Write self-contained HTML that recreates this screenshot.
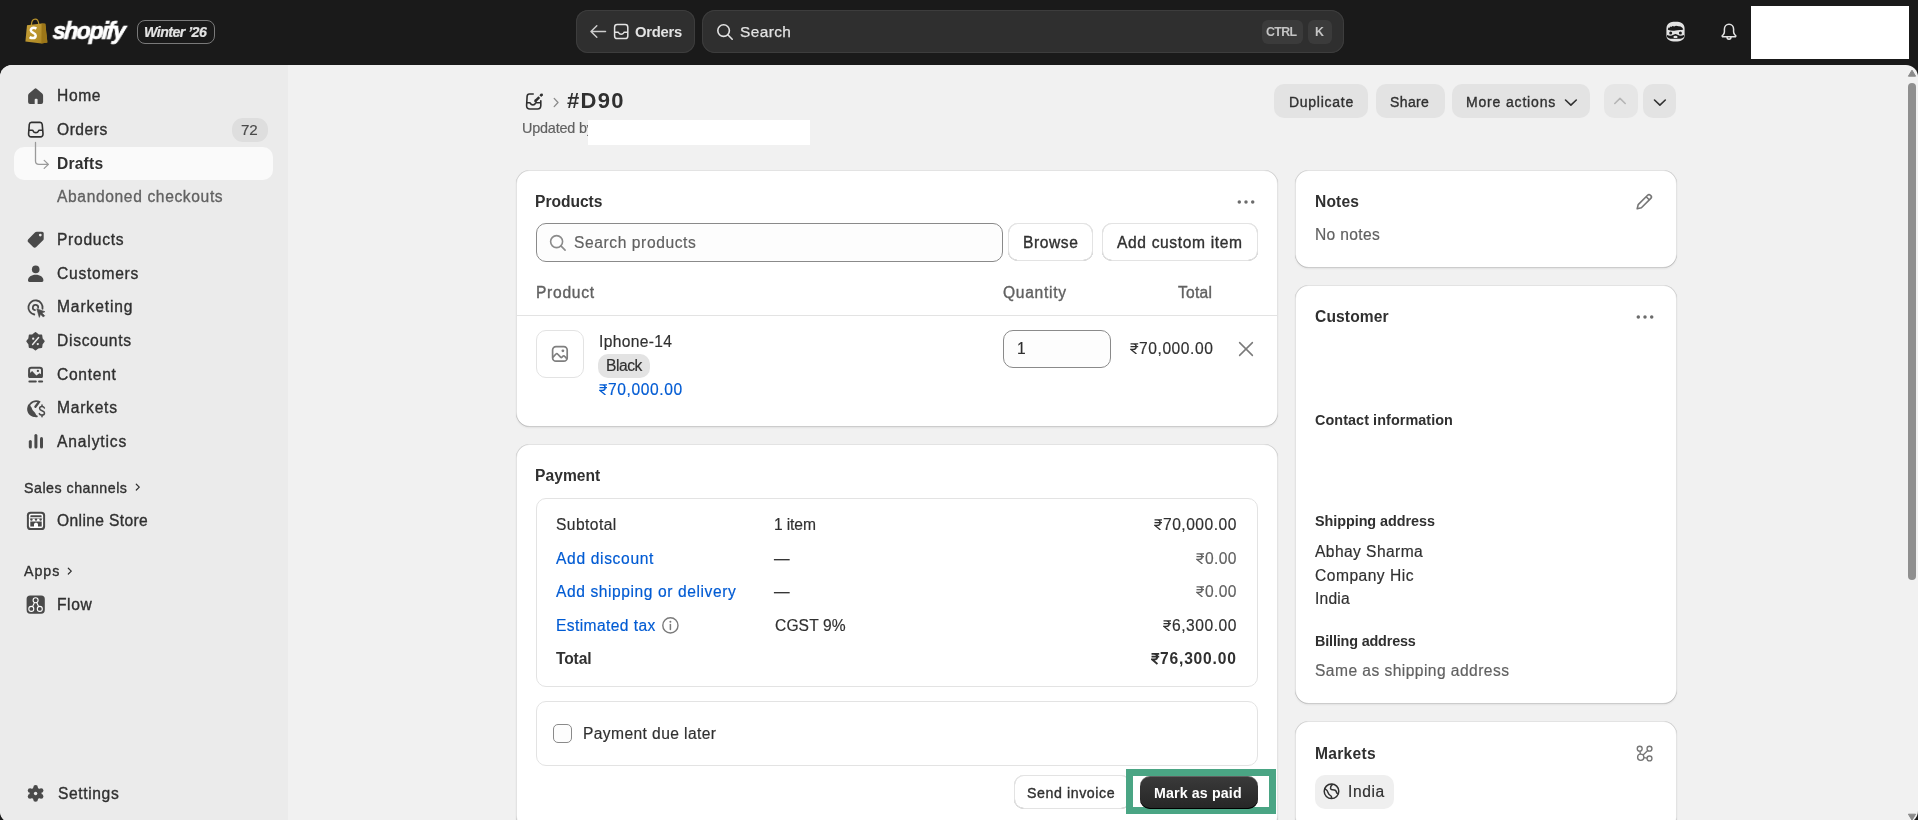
<!DOCTYPE html>
<html><head><meta charset="utf-8">
<style>
*{box-sizing:border-box;margin:0;padding:0}
html,body{width:1918px;height:820px;overflow:hidden;background:#1a1a1a}
body{font-family:"Liberation Sans",sans-serif;color:#303030;position:relative}
.abs{position:absolute}
.t{position:absolute;white-space:nowrap;line-height:1;will-change:transform}
#top{position:absolute;left:0;top:0;width:1918px;height:65px;background:#1a1a1a}
#frame{position:absolute;left:0;top:65px;width:1918px;height:758px;background:#f1f1f1;border-radius:12px}
#sideb{position:absolute;left:0;top:65px;width:288px;height:758px;background:#ebebeb;border-radius:12px 0 0 12px}
</style></head>
<body>
<div id="top"></div>
<svg class="abs" style="left:25px;top:18px" width="23" height="26" viewBox="0 0 23 26"><defs><linearGradient id="bg1" x1="0" y1="0" x2="1" y2="1"><stop offset="0" stop-color="#c9a23a"/><stop offset="1" stop-color="#a98420"/></linearGradient></defs><path d="M2 7.2L16.6 5.4L20.3 5.8L22.4 24.6L16.4 25.4L0.4 23.6Z" fill="url(#bg1)"/><path d="M16.6 5.4L20.3 5.8L22.4 24.6L16.4 25.4Z" fill="#9c7618"/><path d="M6.4 7C6.6 3 8.4 1.2 10.2 1.2C12 1.2 13.4 2.8 13.8 6" fill="none" stroke="#b8922c" stroke-width="1.2"/><path d="M11.4 10.6C10.6 10.1 9.7 9.8 8.7 9.8C6.9 9.8 5.8 10.9 5.8 12.3C5.8 15 10.7 14.7 10.7 17.4C10.7 18.9 9.5 20.1 7.7 20.1C6.6 20.1 5.5 19.7 4.6 19.1" fill="none" stroke="#ffffff" stroke-width="2.5"/></svg>
<div class="t" style="left:53.00px;top:19.53px;font-size:23px;color:#ffffff;letter-spacing:-1.497px;font-weight:700;font-style:italic;transform:skewX(-4deg);-webkit-text-stroke:0.7px #fff">shopify</div>
<div class="abs" style="left:137px;top:20px;width:78px;height:24px;background:none;border-radius:8px;border:1px solid #7a7a7a;box-sizing:border-box"></div>
<div class="t" style="left:143.90px;top:24.98px;font-size:14.2px;color:#e3e3e3;letter-spacing:-0.540px;font-weight:700;font-style:italic;-webkit-text-stroke:0.2px #e3e3e3">Winter ’26</div>
<div class="abs" style="left:576px;top:10px;width:119px;height:43px;background:#2f2f2f;border-radius:12px;box-shadow:0 0 0 1px #3d3d3d inset"></div>
<svg class="abs" style="left:589px;top:23px" width="18" height="17" viewBox="0 0 18 17"><path d="M16.5 8.5H2M7.8 2.8L2 8.5l5.8 5.7" fill="none" stroke="#cccccc" stroke-width="1.5" stroke-linecap="round" stroke-linejoin="round"/></svg>
<svg class="abs" style="left:613px;top:23px" width="17" height="17" viewBox="0 0 17 17"><rect x="1.6" y="1.6" width="13.2" height="14" rx="2.6" fill="none" stroke="#e3e3e3" stroke-width="1.5"/><path d="M1.6 9.2h3.2c.6 0 .9.3 1.1.8.3.7 1 1.2 2.3 1.2s2-.5 2.3-1.2c.2-.5.5-.8 1.1-.8h3.2" fill="none" stroke="#e3e3e3" stroke-width="1.5"/></svg>
<div class="t" style="left:635.40px;top:24.57px;font-size:14.8px;color:#e3e3e3;letter-spacing:-0.247px;font-weight:700">Orders</div>
<div class="abs" style="left:702px;top:10px;width:642px;height:43px;background:#2f2f2f;border-radius:13px;box-shadow:0 0 0 1px #3d3d3d inset"></div>
<svg class="abs" style="left:716px;top:23px" width="18" height="18" viewBox="0 0 18 18"><circle cx="7.6" cy="7.6" r="5.8" fill="none" stroke="#e3e3e3" stroke-width="1.6"/><path d="M11.8 11.8l4.4 4.4" stroke="#e3e3e3" stroke-width="1.6" stroke-linecap="round"/></svg>
<div class="t" style="left:740.40px;top:24.06px;font-size:15.4px;color:#e3e3e3;letter-spacing:0.421px;-webkit-text-stroke:0.25px #e3e3e3">Search</div>
<div class="abs" style="left:1262px;top:20px;width:41px;height:24px;background:#3b3b3b;border-radius:6px;"></div>
<div class="t" style="left:1266.20px;top:25.70px;font-size:12.4px;color:#c4c4c4;letter-spacing:-0.620px;font-weight:700">CTRL</div>
<div class="abs" style="left:1308px;top:20px;width:24px;height:24px;background:#3b3b3b;border-radius:6px;"></div>
<div class="t" style="left:1315.20px;top:25.70px;font-size:12.4px;color:#c4c4c4;letter-spacing:0.000px;font-weight:700">K</div>
<svg class="abs" style="left:1666px;top:21px" width="20" height="21" viewBox="0 0 20 21"><path d="M9.5 0.8C14.8 0.8 18.6 2.6 18.6 8V14.4C18.6 18.6 15 20.4 9.5 20.4S0.4 18.6 0.4 14.4V8C0.4 2.6 4.2 0.8 9.5 0.8z" fill="#e3e3e3"/><path d="M1.8 8.8L2.4 6.4L3.4 6.9L4.1 5.5L5.2 6.1L6.5 5L8.2 5.5L10 4.8L12.4 5.3L14.6 5.6L16.3 6.7L17.3 8.4C15 9.2 12.2 8.8 9.6 9.4C7 10 4.3 9.6 1.8 8.8z" fill="#1a1a1a"/><circle cx="4.7" cy="12" r="1.5" fill="#1a1a1a"/><circle cx="14.4" cy="12" r="1.5" fill="#1a1a1a"/><path d="M1.1 13.9C3.4 15.1 5.8 14.7 7.4 13.7C8.4 13.1 9 12.9 9.5 12.9S10.6 13.1 11.6 13.7C13.2 14.7 15.6 15.1 17.9 13.9L18.3 15.5C17.1 17.5 14.4 17.9 12.2 17.7H6.8C4.6 17.9 1.9 17.5 0.7 15.5z" fill="#1a1a1a"/><ellipse cx="9.5" cy="15.9" rx="2.1" ry="1.2" fill="#e3e3e3"/></svg>
<svg class="abs" style="left:1719px;top:22px" width="20" height="20" viewBox="0 0 20 20"><path d="M10 2.2c-2.8 0-4.6 2.2-4.6 5v2.6c0 1-.4 1.9-1 2.6l-1 1.1c-.5.6-.1 1.3.6 1.3h12c.7 0 1.1-.7.6-1.3l-1-1.1c-.6-.7-1-1.6-1-2.6V7.2c0-2.8-1.8-5-4.6-5z" fill="none" stroke="#e3e3e3" stroke-width="1.5" stroke-linejoin="round"/><path d="M8 15c0 1.2.9 2.2 2 2.2s2-1 2-2.2" fill="none" stroke="#e3e3e3" stroke-width="1.5"/></svg>
<div class="abs" style="left:1751px;top:6px;width:158px;height:53px;background:#ffffff;border-radius:0px;"></div>
<div id="frame"></div><div id="sideb"></div>
<svg class="abs" style="left:27px;top:87px" width="18" height="18" viewBox="0 0 18 18"><path d="M7.6 1.7a1.5 1.5 0 0 1 2 0l5.6 4.9c.6.5.9 1.2.9 2V15a1.9 1.9 0 0 1-1.9 1.9h-3.6v-4.2a1 1 0 0 0-1-1h-.9a1 1 0 0 0-1 1v4.2H3A1.9 1.9 0 0 1 1.1 15V8.6c0-.8.3-1.5.9-2z" fill="#4a4a4a"/></svg>
<div class="t" style="left:57.40px;top:87.79px;font-size:15.6px;color:#303030;letter-spacing:0.629px;-webkit-text-stroke:0.35px #303030">Home</div>
<svg class="abs" style="left:27px;top:121px" width="18" height="18" viewBox="0 0 18 18"><path d="M4.4 1.4H13C14.2 1.4 15 2.2 15.2 3.4L16 12.6C16.2 14.6 15.1 15.9 13.3 15.9H4.3C2.5 15.9 1.4 14.6 1.6 12.6L2.3 3.4C2.5 2.2 3.3 1.4 4.4 1.4Z" fill="none" stroke="#303030" stroke-width="1.6"/><path d="M1.8 9.3H5.2c.6 0 .9.4 1.1.9.3.8 1.2 1.4 2.5 1.4s2.2-.6 2.5-1.4c.2-.5.5-.9 1.1-.9h3.4" fill="none" stroke="#303030" stroke-width="1.6"/></svg>
<div class="t" style="left:57.40px;top:122.39px;font-size:15.6px;color:#303030;letter-spacing:0.525px;-webkit-text-stroke:0.35px #303030">Orders</div>
<div class="abs" style="left:232px;top:118px;width:36px;height:24px;background:#dedede;border-radius:11px;"></div>
<div class="t" style="left:241.10px;top:122.23px;font-size:15.2px;color:#4a4a4a;letter-spacing:-0.307px;-webkit-text-stroke:0.18px #4a4a4a">72</div>
<div class="abs" style="left:14px;top:147px;width:259px;height:33px;background:#fafafa;border-radius:10px;"></div>
<svg class="abs" style="left:30px;top:141px" width="22" height="30" viewBox="0 0 22 30"><path d="M5.5 1.4v18.6c0 2 1.4 3.4 3.4 3.4h9.5M14.2 19.4l4.2 4-4.2 4" fill="none" stroke="#9a9a9a" stroke-width="1.3" stroke-linecap="round" stroke-linejoin="round"/></svg>
<div class="t" style="left:57.40px;top:155.79px;font-size:15.6px;color:#303030;letter-spacing:0.204px;font-weight:700">Drafts</div>
<div class="t" style="left:57.40px;top:188.59px;font-size:15.6px;color:#616161;letter-spacing:0.629px;-webkit-text-stroke:0.3px #616161">Abandoned checkouts</div>
<svg class="abs" style="left:24.9px;top:229.3px" width="21.4" height="21.4" viewBox="0 0 20 20"><path d="M11 2.5H16C16.8 2.5 17.5 3.2 17.5 4V9C17.5 9.6 17.3 10.1 16.9 10.5L10.5 16.9C9.7 17.7 8.4 17.7 7.6 16.9L3.1 12.4C2.3 11.6 2.3 10.3 3.1 9.5L9.5 3.1C9.9 2.7 10.4 2.5 11 2.5Z" fill="#4a4a4a"/><circle cx="14.3" cy="5.7" r="1.3" fill="#ebebeb"/></svg>
<div class="t" style="left:57.40px;top:231.99px;font-size:15.6px;color:#303030;letter-spacing:0.705px;-webkit-text-stroke:0.35px #303030">Products</div>
<svg class="abs" style="left:27px;top:264px" width="18" height="18" viewBox="0 0 18 18"><circle cx="8.7" cy="5.4" r="3.8" fill="#4a4a4a"/><path d="M1 16.3c0-3.3 3.2-5.6 7.7-5.6s7.7 2.3 7.7 5.6c0 .9-.5 1.6-1.4 1.6H2.4C1.5 17.9 1 17.2 1 16.3z" fill="#4a4a4a"/></svg>
<div class="t" style="left:57.40px;top:265.59px;font-size:15.6px;color:#303030;letter-spacing:0.735px;-webkit-text-stroke:0.35px #303030">Customers</div>
<svg class="abs" style="left:22px;top:294px" width="28" height="30" viewBox="22 294 28 30"><path d="M34.27 314.49A7.1 7.1 0 1 1 42.49 308.73" fill="none" stroke="#4a4a4a" stroke-width="1.8" stroke-linecap="round"/><path d="M35.03 310.16A2.7 2.7 0 1 1 38.16 307.97" fill="none" stroke="#4a4a4a" stroke-width="1.7" stroke-linecap="round"/><path d="M36.8 308.8L45 311.7L41.9 312.9L44.7 315.7L43.3 317.1L40.5 314.3L39.3 317.4Z" fill="#4a4a4a" stroke="#4a4a4a" stroke-width="0.6" stroke-linejoin="round"/></svg>
<div class="t" style="left:57.40px;top:299.49px;font-size:15.6px;color:#303030;letter-spacing:0.876px;-webkit-text-stroke:0.35px #303030">Marketing</div>
<svg class="abs" style="left:22px;top:328px" width="28" height="28" viewBox="22 328 28 28"><path d="M35.50 332.90L38.14 334.93L41.44 335.36L41.87 338.66L43.90 341.30L41.87 343.94L41.44 347.24L38.14 347.67L35.50 349.70L32.86 347.67L29.56 347.24L29.13 343.94L27.10 341.30L29.13 338.66L29.56 335.36L32.86 334.93Z" fill="#4a4a4a" stroke="#4a4a4a" stroke-width="1.6" stroke-linejoin="round"/><path d="M32.6 344.5L38.6 337.6" stroke="#ebebeb" stroke-width="1.5" stroke-linecap="round"/><circle cx="33.2" cy="338.7" r="1.15" fill="#ebebeb"/><circle cx="37.8" cy="344.1" r="1.15" fill="#ebebeb"/></svg>
<div class="t" style="left:57.40px;top:332.89px;font-size:15.6px;color:#303030;letter-spacing:0.701px;-webkit-text-stroke:0.35px #303030">Discounts</div>
<svg class="abs" style="left:22px;top:362px" width="28" height="28" viewBox="22 362 28 28"><rect x="29.1" y="367.8" width="12.9" height="9.3" rx="2.2" fill="none" stroke="#4a4a4a" stroke-width="2"/><path d="M28.4 374.6L32.1 371L36.4 375.4L39.4 373.3L42.7 375.3V376.8C42.7 377.5 42.2 378.1 41.5 378.1H29.6C28.9 378.1 28.4 377.5 28.4 376.8z" fill="#4a4a4a"/><circle cx="37.9" cy="370.9" r="1.15" fill="#4a4a4a"/><rect x="28.4" y="380.6" width="8.4" height="1.9" rx=".95" fill="#4a4a4a"/><rect x="38.1" y="380.6" width="5" height="1.9" rx=".95" fill="#4a4a4a"/></svg>
<div class="t" style="left:57.40px;top:366.59px;font-size:15.6px;color:#303030;letter-spacing:0.710px;-webkit-text-stroke:0.35px #303030">Content</div>
<svg class="abs" style="left:20px;top:395px" width="30" height="30" viewBox="20 395 30 30"><path d="M40.2 402.3A7.6 7.6 0 1 0 37.6 416.2" stroke="#4a4a4a" stroke-width="1.6" fill="none"/><path d="M28.6 404.2C30.3 405.6 31.6 407 32 408.8C32.4 410.9 34.4 411.5 35.2 412.9C35.7 414 36.3 415.4 37.3 416.4A7.6 7.6 0 0 1 27.2 408.5A7.6 7.6 0 0 1 28.6 404.2Z" fill="#4a4a4a"/><path d="M35.4 406.8L38.4 402.8" stroke="#4a4a4a" stroke-width="2.3" stroke-linecap="round"/><path d="M44.4 408C44 407.1 43.1 406.5 42 406.5C40.6 406.5 39.6 407.3 39.6 408.5C39.6 411.2 44.5 410.3 44.5 413C44.5 414.2 43.4 415.1 41.9 415.1C40.7 415.1 39.7 414.5 39.3 413.6M42 405V406.5M42 415.1V416.8" fill="none" stroke="#4a4a4a" stroke-width="1.5" stroke-linecap="round"/></svg>
<div class="t" style="left:57.40px;top:399.59px;font-size:15.6px;color:#303030;letter-spacing:0.754px;-webkit-text-stroke:0.35px #303030">Markets</div>
<svg class="abs" style="left:27px;top:432px" width="18" height="18" viewBox="0 0 18 18"><rect x="1.8" y="8" width="3" height="8.6" rx="1.5" fill="#4a4a4a"/><rect x="7.4" y="2" width="3" height="14.6" rx="1.5" fill="#4a4a4a"/><rect x="13" y="5" width="3" height="11.6" rx="1.5" fill="#4a4a4a"/></svg>
<div class="t" style="left:57.40px;top:433.79px;font-size:15.6px;color:#303030;letter-spacing:0.860px;-webkit-text-stroke:0.35px #303030">Analytics</div>
<div class="t" style="left:23.90px;top:480.88px;font-size:14.2px;color:#303030;letter-spacing:0.515px;-webkit-text-stroke:0.35px #303030">Sales channels</div>
<svg class="abs" style="left:133px;top:482px" width="10" height="10" viewBox="0 0 10 10"><path d="M3.3 2.2l3 2.9-3 2.9" fill="none" stroke="#303030" stroke-width="1.2" stroke-linecap="round" stroke-linejoin="round"/></svg>
<svg class="abs" style="left:26px;top:511px" width="20" height="20" viewBox="0 0 20 20"><rect x="0.9" y="0.7" width="18.2" height="18.3" rx="3.6" fill="#4a4a4a"/><rect x="2.9" y="2.7" width="14.2" height="14.3" rx="2" fill="#ffffff"/><rect x="4.3" y="4.2" width="11.4" height="1.9" rx="0.9" fill="#4a4a4a"/><path d="M3.6 7.2h12.8" stroke="#9a9a9a" stroke-width="1.2"/><circle cx="5.4" cy="8.6" r="1.2" fill="#4a4a4a"/><circle cx="10" cy="8.6" r="1.2" fill="#4a4a4a"/><circle cx="14.6" cy="8.6" r="1.2" fill="#4a4a4a"/><path d="M4.3 10.4h11.4V15.6H12V13.4c0-1-.8-1.7-2-1.7s-2 .7-2 1.7v2.2H4.3z" fill="#4a4a4a"/></svg>
<div class="t" style="left:57.40px;top:512.99px;font-size:15.6px;color:#303030;letter-spacing:0.371px;-webkit-text-stroke:0.35px #303030">Online Store</div>
<div class="t" style="left:23.90px;top:564.38px;font-size:14.2px;color:#303030;letter-spacing:0.978px;-webkit-text-stroke:0.35px #303030">Apps</div>
<svg class="abs" style="left:65px;top:565.5px" width="10" height="10" viewBox="0 0 10 10"><path d="M3.3 2.2l3 2.9-3 2.9" fill="none" stroke="#303030" stroke-width="1.2" stroke-linecap="round" stroke-linejoin="round"/></svg>
<svg class="abs" style="left:26.3px;top:595.3px" width="20" height="20" viewBox="0 0 20 20"><rect x="0.6" y="0.4" width="18.2" height="18.3" rx="3.6" fill="#4a4a4a"/><g fill="none" stroke="#fff" stroke-width="1.1"><circle cx="9.6" cy="5.3" r="2.5"/><circle cx="5.3" cy="13.9" r="2.5"/><circle cx="13.8" cy="13.9" r="2.5"/><path d="M8.5 7.5L6.6 11.6M10.7 7.5l1.9 4.1"/></g></svg>
<div class="t" style="left:57.40px;top:596.69px;font-size:15.6px;color:#303030;letter-spacing:0.588px;-webkit-text-stroke:0.35px #303030">Flow</div>
<svg class="abs" style="left:26px;top:784px" width="19" height="19" viewBox="0 0 19 19"><g fill="#4a4a4a"><circle cx="9.6" cy="3.4" r="2.3"/><circle cx="9.6" cy="15.5" r="2.3"/><circle cx="4.1" cy="6.5" r="2.3"/><circle cx="15.1" cy="6.5" r="2.3"/><circle cx="4.1" cy="12.4" r="2.3"/><circle cx="15.1" cy="12.4" r="2.3"/><circle cx="9.6" cy="9.45" r="6"/></g><circle cx="9.6" cy="9.45" r="1.7" fill="#ebebeb"/></svg>
<div class="t" style="left:57.60px;top:785.89px;font-size:15.6px;color:#303030;letter-spacing:0.619px;-webkit-text-stroke:0.35px #303030">Settings</div>
<svg class="abs" style="left:524px;top:91px" width="20" height="20" viewBox="0 0 20 20"><path d="M9.2 3H5.4C4 3 3.2 4 3.1 5.4L2.6 14.6C2.5 16.8 3.8 18 5.8 18H13.4C15.5 18 16.8 16.8 16.8 14.6V9.8" fill="none" stroke="#303030" stroke-width="1.6" stroke-linecap="round"/><path d="M2.8 11.7h2.7c.6 0 .9.4 1.1.9.3.8 1.2 1.3 2.3 1.3s2-.5 2.3-1.3c.2-.5.5-.9 1.1-.9h4.5" fill="none" stroke="#303030" stroke-width="1.6"/><path d="M11.5 9.9L15.3 6.1" stroke="#303030" stroke-width="2.6"/><circle cx="11.5" cy="9.9" r="1.3" fill="#303030"/><path d="M16.3 5.1L17.7 3.7" stroke="#303030" stroke-width="2.6"/><circle cx="17.7" cy="3.7" r="1.3" fill="#303030"/></svg>
<svg class="abs" style="left:552px;top:97px" width="8" height="11" viewBox="0 0 8 11"><path d="M2.2 1.4l3.8 4.1-3.8 4.1" fill="none" stroke="#8a8a8a" stroke-width="1.3" stroke-linecap="round" stroke-linejoin="round"/></svg>
<div class="t" style="left:567.10px;top:90.18px;font-size:22px;color:#303030;letter-spacing:1.302px;font-weight:700">#D90</div>
<div class="t" style="left:521.90px;top:120.81px;font-size:14.4px;color:#616161;letter-spacing:-0.184px;-webkit-text-stroke:0.18px #616161">Updated by</div>
<div class="abs" style="left:588px;top:120px;width:222px;height:25px;background:#ffffff;border-radius:0px;"></div>
<div class="abs" style="left:1274px;top:84px;width:94px;height:34px;background:#e3e3e3;border-radius:10px;"></div>
<div class="t" style="left:1288.60px;top:94.85px;font-size:14px;color:#303030;letter-spacing:0.729px;-webkit-text-stroke:0.35px #303030">Duplicate</div>
<div class="abs" style="left:1376px;top:84px;width:69px;height:34px;background:#e3e3e3;border-radius:10px;"></div>
<div class="t" style="left:1390.00px;top:94.85px;font-size:14px;color:#303030;letter-spacing:0.385px;-webkit-text-stroke:0.35px #303030">Share</div>
<div class="abs" style="left:1452px;top:84px;width:138px;height:34px;background:#e3e3e3;border-radius:10px;"></div>
<div class="t" style="left:1465.90px;top:94.85px;font-size:14px;color:#303030;letter-spacing:0.832px;-webkit-text-stroke:0.35px #303030">More actions</div>
<svg class="abs" style="left:1563px;top:97px" width="16" height="11" viewBox="0 0 16 11"><path d="M2.5 3l5.4 5.2L13.3 3" fill="none" stroke="#303030" stroke-width="1.6" stroke-linecap="round" stroke-linejoin="round"/></svg>
<div class="abs" style="left:1604px;top:84px;width:34px;height:34px;background:#e6e6e6;border-radius:10px;"></div>
<svg class="abs" style="left:1612px;top:95px" width="16" height="11" viewBox="0 0 16 11"><path d="M2.8 8.5L8 3.4l5.2 5.1" fill="none" stroke="#b5b5b5" stroke-width="1.6" stroke-linecap="round" stroke-linejoin="round"/></svg>
<div class="abs" style="left:1643px;top:84px;width:33px;height:34px;background:#e3e3e3;border-radius:10px;"></div>
<svg class="abs" style="left:1652px;top:97px" width="16" height="11" viewBox="0 0 16 11"><path d="M2.5 3l5.4 5.2L13.3 3" fill="none" stroke="#303030" stroke-width="1.6" stroke-linecap="round" stroke-linejoin="round"/></svg>
<div class="abs" style="left:516px;top:170px;width:762px;height:257px;background:#ffffff;border-radius:14px;box-shadow:0 1px 2px 0 rgba(26,26,26,.07),0 1px 0 0 rgba(0,0,0,.11) inset,0 -1px 0 0 rgba(0,0,0,.2) inset,-1px 0 0 0 rgba(0,0,0,.11) inset,1px 0 0 0 rgba(0,0,0,.11) inset"></div>
<div class="t" style="left:535.10px;top:193.79px;font-size:15.6px;color:#303030;letter-spacing:-0.016px;font-weight:700">Products</div>
<svg class="abs" style="left:1235.6px;top:197.6px" width="20" height="8" viewBox="0 0 20 8"><circle cx="3.3" cy="4" r="1.75" fill="#6b6b6b"/><circle cx="10" cy="4" r="1.75" fill="#6b6b6b"/><circle cx="16.7" cy="4" r="1.75" fill="#6b6b6b"/></svg>
<div class="abs" style="left:536px;top:223px;width:467px;height:39px;background:#fdfdfd;border-radius:10px;border:1px solid #8a8a8a;box-sizing:border-box"></div>
<svg class="abs" style="left:548px;top:233px" width="20" height="20" viewBox="0 0 20 20"><circle cx="8.6" cy="8.6" r="6" fill="none" stroke="#8a8a8a" stroke-width="1.6"/><path d="M12.9 12.9l4.2 4.2" stroke="#8a8a8a" stroke-width="1.6" stroke-linecap="round"/></svg>
<div class="t" style="left:574.40px;top:234.59px;font-size:15.6px;color:#616161;letter-spacing:0.586px;-webkit-text-stroke:0.18px #616161">Search products</div>
<div class="abs" style="left:1008px;top:223px;width:85px;height:38px;background:#ffffff;border-radius:10px;box-shadow:0 0 0 1px #e3e3e3 inset,0 -1px 0 0 #b5b5b5 inset,1px 0 0 0 #d4d4d4 inset,-1px 0 0 0 #d4d4d4 inset"></div>
<div class="t" style="left:1022.60px;top:234.99px;font-size:15.6px;color:#303030;letter-spacing:0.576px;-webkit-text-stroke:0.35px #303030">Browse</div>
<div class="abs" style="left:1102px;top:223px;width:156px;height:38px;background:#ffffff;border-radius:10px;box-shadow:0 0 0 1px #e3e3e3 inset,0 -1px 0 0 #b5b5b5 inset,1px 0 0 0 #d4d4d4 inset,-1px 0 0 0 #d4d4d4 inset"></div>
<div class="t" style="left:1116.80px;top:234.99px;font-size:15.6px;color:#303030;letter-spacing:0.637px;-webkit-text-stroke:0.35px #303030">Add custom item</div>
<div class="t" style="left:536.00px;top:285.09px;font-size:15.6px;color:#616161;letter-spacing:0.706px;-webkit-text-stroke:0.35px #616161">Product</div>
<div class="t" style="left:1002.70px;top:285.09px;font-size:15.6px;color:#616161;letter-spacing:0.715px;-webkit-text-stroke:0.35px #616161">Quantity</div>
<div class="t" style="left:1177.60px;top:285.09px;font-size:15.6px;color:#616161;letter-spacing:0.230px;-webkit-text-stroke:0.35px #616161">Total</div>
<div class="abs" style="left:516px;top:315px;width:762px;height:1px;background:#e3e3e3;border-radius:0px;"></div>
<div class="abs" style="left:536.3px;top:330px;width:47.5px;height:48px;background:#ffffff;border-radius:10px;border:1px solid #e3e3e3;box-sizing:border-box"></div>
<svg class="abs" style="left:550px;top:344px" width="20" height="20" viewBox="0 0 20 20"><rect x="2.6" y="2.6" width="14.6" height="14.6" rx="3.4" fill="none" stroke="#7f7f7f" stroke-width="1.7"/><circle cx="12.9" cy="6.8" r="1.4" fill="#7f7f7f"/><path d="M2.8 13.4l3.2-3.4c.5-.5 1.2-.5 1.6 0l3 3.2c.4.4 1 .4 1.4 0l1-1c.5-.5 1.2-.4 1.6.1l2.6 2.8" fill="none" stroke="#7f7f7f" stroke-width="1.7"/></svg>
<div class="t" style="left:598.60px;top:333.99px;font-size:15.6px;color:#303030;letter-spacing:0.342px;-webkit-text-stroke:0.18px #303030">Iphone-14</div>
<div class="abs" style="left:598px;top:354px;width:52px;height:24px;background:#e3e3e3;border-radius:10px;"></div>
<div class="t" style="left:605.60px;top:357.59px;font-size:15.6px;color:#303030;letter-spacing:-0.462px;-webkit-text-stroke:0.18px #303030">Black</div>
<div class="t" style="left:607.77px;top:381.89px;font-size:15.6px;color:#005bd3;letter-spacing:0.603px;-webkit-text-stroke:0.18px #005bd3">70,000.00</div>
<svg class="abs" style="left:598.70px;top:383.76px" width="8.74" height="11.34" viewBox="0 0 10 13"><path d="M0.6 1H9.4M0.6 4.2H9.4M0.9 1H3.6C5.9 1 7.1 2.4 7.1 4.2C7.1 6 5.9 7.4 3.6 7.4H1.2L7.4 12.6" fill="none" stroke="#005bd3" stroke-width="1.52" stroke-linejoin="miter"/></svg>
<div class="abs" style="left:1003px;top:330px;width:108px;height:38px;background:#fdfdfd;border-radius:10px;border:1px solid #8a8a8a;box-sizing:border-box"></div>
<div class="t" style="left:1016.60px;top:340.69px;font-size:15.6px;color:#303030;letter-spacing:0.000px;-webkit-text-stroke:0.18px #303030">1</div>
<div class="t" style="left:1138.97px;top:340.69px;font-size:15.6px;color:#303030;letter-spacing:0.566px;-webkit-text-stroke:0.18px #303030">70,000.00</div>
<svg class="abs" style="left:1129.90px;top:342.56px" width="8.74" height="11.34" viewBox="0 0 10 13"><path d="M0.6 1H9.4M0.6 4.2H9.4M0.9 1H3.6C5.9 1 7.1 2.4 7.1 4.2C7.1 6 5.9 7.4 3.6 7.4H1.2L7.4 12.6" fill="none" stroke="#303030" stroke-width="1.52" stroke-linejoin="miter"/></svg>
<svg class="abs" style="left:1235px;top:338px" width="22" height="22" viewBox="0 0 22 22"><path d="M4.6 4.6l12.8 12.8M17.4 4.6L4.6 17.4" stroke="#7a7a7a" stroke-width="1.5" stroke-linecap="round"/></svg>
<div class="abs" style="left:516px;top:444px;width:762px;height:386px;background:#ffffff;border-radius:14px;box-shadow:0 1px 2px 0 rgba(26,26,26,.07),0 1px 0 0 rgba(0,0,0,.11) inset,0 -1px 0 0 rgba(0,0,0,.2) inset,-1px 0 0 0 rgba(0,0,0,.11) inset,1px 0 0 0 rgba(0,0,0,.11) inset"></div>
<div class="t" style="left:535.10px;top:467.79px;font-size:15.6px;color:#303030;letter-spacing:0.045px;font-weight:700">Payment</div>
<div class="abs" style="left:536px;top:498px;width:722px;height:189px;background:none;border-radius:10px;border:1px solid #e3e3e3;box-sizing:border-box"></div>
<div class="t" style="left:556.40px;top:516.89px;font-size:15.6px;color:#303030;letter-spacing:0.437px;-webkit-text-stroke:0.18px #303030">Subtotal</div>
<div class="t" style="left:774.40px;top:516.89px;font-size:15.6px;color:#303030;letter-spacing:-0.116px;-webkit-text-stroke:0.18px #303030">1 item</div>
<div class="t" style="left:1162.67px;top:516.89px;font-size:15.6px;color:#303030;letter-spacing:0.503px;-webkit-text-stroke:0.18px #303030">70,000.00</div>
<svg class="abs" style="left:1153.60px;top:518.76px" width="8.74" height="11.34" viewBox="0 0 10 13"><path d="M0.6 1H9.4M0.6 4.2H9.4M0.9 1H3.6C5.9 1 7.1 2.4 7.1 4.2C7.1 6 5.9 7.4 3.6 7.4H1.2L7.4 12.6" fill="none" stroke="#303030" stroke-width="1.52" stroke-linejoin="miter"/></svg>
<div class="t" style="left:556.40px;top:550.69px;font-size:15.6px;color:#005bd3;letter-spacing:0.655px;-webkit-text-stroke:0.18px #005bd3">Add discount</div>
<div class="t" style="left:774.40px;top:550.69px;font-size:15.6px;color:#303030;letter-spacing:0.000px;-webkit-text-stroke:0.18px #303030">—</div>
<div class="t" style="left:1204.57px;top:550.69px;font-size:15.6px;color:#616161;letter-spacing:0.389px;-webkit-text-stroke:0.18px #616161">0.00</div>
<svg class="abs" style="left:1195.50px;top:552.56px" width="8.74" height="11.34" viewBox="0 0 10 13"><path d="M0.6 1H9.4M0.6 4.2H9.4M0.9 1H3.6C5.9 1 7.1 2.4 7.1 4.2C7.1 6 5.9 7.4 3.6 7.4H1.2L7.4 12.6" fill="none" stroke="#616161" stroke-width="1.52" stroke-linejoin="miter"/></svg>
<div class="t" style="left:556.40px;top:584.09px;font-size:15.6px;color:#005bd3;letter-spacing:0.578px;-webkit-text-stroke:0.18px #005bd3">Add shipping or delivery</div>
<div class="t" style="left:774.40px;top:584.09px;font-size:15.6px;color:#303030;letter-spacing:0.000px;-webkit-text-stroke:0.18px #303030">—</div>
<div class="t" style="left:1204.57px;top:584.09px;font-size:15.6px;color:#616161;letter-spacing:0.389px;-webkit-text-stroke:0.18px #616161">0.00</div>
<svg class="abs" style="left:1195.50px;top:585.96px" width="8.74" height="11.34" viewBox="0 0 10 13"><path d="M0.6 1H9.4M0.6 4.2H9.4M0.9 1H3.6C5.9 1 7.1 2.4 7.1 4.2C7.1 6 5.9 7.4 3.6 7.4H1.2L7.4 12.6" fill="none" stroke="#616161" stroke-width="1.52" stroke-linejoin="miter"/></svg>
<div class="t" style="left:556.40px;top:617.79px;font-size:15.6px;color:#005bd3;letter-spacing:0.399px;-webkit-text-stroke:0.18px #005bd3">Estimated tax</div>
<svg class="abs" style="left:661px;top:616px" width="19" height="19" viewBox="0 0 19 19"><circle cx="9.4" cy="9.4" r="7.6" fill="none" stroke="#7a7a7a" stroke-width="1.4"/><path d="M9.4 8.4v5" stroke="#7a7a7a" stroke-width="1.5" stroke-linecap="round"/><circle cx="9.4" cy="5.8" r="1" fill="#7a7a7a"/></svg>
<div class="t" style="left:774.90px;top:617.79px;font-size:15.6px;color:#303030;letter-spacing:0.114px;-webkit-text-stroke:0.18px #303030">CGST 9%</div>
<div class="t" style="left:1171.57px;top:617.79px;font-size:15.6px;color:#303030;letter-spacing:0.543px;-webkit-text-stroke:0.18px #303030">6,300.00</div>
<svg class="abs" style="left:1162.50px;top:619.66px" width="8.74" height="11.34" viewBox="0 0 10 13"><path d="M0.6 1H9.4M0.6 4.2H9.4M0.9 1H3.6C5.9 1 7.1 2.4 7.1 4.2C7.1 6 5.9 7.4 3.6 7.4H1.2L7.4 12.6" fill="none" stroke="#303030" stroke-width="1.52" stroke-linejoin="miter"/></svg>
<div class="t" style="left:556.40px;top:651.49px;font-size:15.6px;color:#303030;letter-spacing:-0.141px;font-weight:700">Total</div>
<div class="t" style="left:1160.17px;top:651.49px;font-size:15.6px;color:#303030;letter-spacing:0.816px;font-weight:700">76,300.00</div>
<svg class="abs" style="left:1151.10px;top:653.36px" width="8.74" height="11.34" viewBox="0 0 10 13"><path d="M0.6 1H9.4M0.6 4.2H9.4M0.9 1H3.6C5.9 1 7.1 2.4 7.1 4.2C7.1 6 5.9 7.4 3.6 7.4H1.2L7.4 12.6" fill="none" stroke="#303030" stroke-width="2.15" stroke-linejoin="miter"/></svg>
<div class="abs" style="left:536px;top:701px;width:722px;height:65px;background:none;border-radius:10px;border:1px solid #e3e3e3;box-sizing:border-box"></div>
<div class="abs" style="left:553px;top:723.8px;width:19px;height:19px;background:#fdfdfd;border-radius:5px;border:1.3px solid #8a8a8a;box-sizing:border-box"></div>
<div class="t" style="left:582.60px;top:725.59px;font-size:15.6px;color:#303030;letter-spacing:0.400px;-webkit-text-stroke:0.18px #303030">Payment due later</div>
<div class="abs" style="left:1013.5px;top:775.2px;width:117px;height:33.5px;background:#ffffff;border-radius:10px;box-shadow:0 0 0 1px #e3e3e3 inset,0 -1px 0 0 #b5b5b5 inset,1px 0 0 0 #d4d4d4 inset,-1px 0 0 0 #d4d4d4 inset"></div>
<div class="t" style="left:1027.40px;top:785.78px;font-size:14.2px;color:#303030;letter-spacing:0.581px;-webkit-text-stroke:0.35px #303030">Send invoice</div>
<div class="abs" style="left:1126px;top:769px;width:149.5px;height:45px;background:none;border-radius:0px;border:7px solid #4aa584;box-sizing:border-box"></div>
<div class="abs" style="left:1140.3px;top:776px;width:117.5px;height:32.7px;background:linear-gradient(#3a3a3a,#262626);border-radius:10px;box-shadow:0 -1px 0 0 #000 inset,0 1px 0 0 rgba(255,255,255,.2) inset"></div>
<div class="t" style="left:1154.40px;top:785.78px;font-size:14.2px;color:#ffffff;letter-spacing:0.152px;font-weight:700">Mark as paid</div>
<div class="abs" style="left:1295px;top:170px;width:382px;height:98px;background:#ffffff;border-radius:14px;box-shadow:0 1px 2px 0 rgba(26,26,26,.07),0 1px 0 0 rgba(0,0,0,.11) inset,0 -1px 0 0 rgba(0,0,0,.2) inset,-1px 0 0 0 rgba(0,0,0,.11) inset,1px 0 0 0 rgba(0,0,0,.11) inset"></div>
<div class="t" style="left:1314.60px;top:193.79px;font-size:15.6px;color:#303030;letter-spacing:0.165px;font-weight:700">Notes</div>
<svg class="abs" style="left:1634px;top:193px" width="20" height="18" viewBox="0 0 20 18"><path d="M13.6 2.2c.8-.8 2-.8 2.8 0l.4.4c.8.8.8 2 0 2.8L7.4 14.8 3.2 15.8l1-4.2z" fill="none" stroke="#767676" stroke-width="1.6" stroke-linejoin="round"/><path d="M12.2 3.8l3 3" stroke="#767676" stroke-width="1.6"/></svg>
<div class="t" style="left:1315.40px;top:226.79px;font-size:15.6px;color:#616161;letter-spacing:0.352px;-webkit-text-stroke:0.18px #616161">No notes</div>
<div class="abs" style="left:1295px;top:285px;width:382px;height:419px;background:#ffffff;border-radius:14px;box-shadow:0 1px 2px 0 rgba(26,26,26,.07),0 1px 0 0 rgba(0,0,0,.11) inset,0 -1px 0 0 rgba(0,0,0,.2) inset,-1px 0 0 0 rgba(0,0,0,.11) inset,1px 0 0 0 rgba(0,0,0,.11) inset"></div>
<div class="t" style="left:1314.60px;top:308.79px;font-size:15.6px;color:#303030;letter-spacing:0.127px;font-weight:700">Customer</div>
<svg class="abs" style="left:1634.8px;top:312.5px" width="20" height="8" viewBox="0 0 20 8"><circle cx="3.3" cy="4" r="1.75" fill="#6b6b6b"/><circle cx="10" cy="4" r="1.75" fill="#6b6b6b"/><circle cx="16.7" cy="4" r="1.75" fill="#6b6b6b"/></svg>
<div class="t" style="left:1315.40px;top:412.71px;font-size:14.4px;color:#303030;letter-spacing:0.067px;font-weight:700">Contact information</div>
<div class="t" style="left:1315.40px;top:513.61px;font-size:14.4px;color:#303030;letter-spacing:-0.055px;font-weight:700">Shipping address</div>
<div class="t" style="left:1315.40px;top:543.69px;font-size:15.6px;color:#303030;letter-spacing:0.419px;-webkit-text-stroke:0.18px #303030">Abhay Sharma</div>
<div class="t" style="left:1315.40px;top:567.59px;font-size:15.6px;color:#303030;letter-spacing:0.487px;-webkit-text-stroke:0.18px #303030">Company Hic</div>
<div class="t" style="left:1315.40px;top:591.49px;font-size:15.6px;color:#303030;letter-spacing:0.193px;-webkit-text-stroke:0.18px #303030">India</div>
<div class="t" style="left:1315.40px;top:634.01px;font-size:14.4px;color:#303030;letter-spacing:-0.166px;font-weight:700">Billing address</div>
<div class="t" style="left:1315.40px;top:663.19px;font-size:15.6px;color:#616161;letter-spacing:0.442px;-webkit-text-stroke:0.18px #616161">Same as shipping address</div>
<div class="abs" style="left:1295px;top:721px;width:382px;height:110px;background:#ffffff;border-radius:14px;box-shadow:0 1px 2px 0 rgba(26,26,26,.07),0 1px 0 0 rgba(0,0,0,.11) inset,0 -1px 0 0 rgba(0,0,0,.2) inset,-1px 0 0 0 rgba(0,0,0,.11) inset,1px 0 0 0 rgba(0,0,0,.11) inset"></div>
<div class="t" style="left:1314.60px;top:745.79px;font-size:15.6px;color:#303030;letter-spacing:0.273px;font-weight:700">Markets</div>
<svg class="abs" style="left:1630px;top:740px" width="30" height="28" viewBox="0 0 30 28"><g fill="none" stroke="#767676" stroke-width="1.35"><circle cx="9.7" cy="8.7" r="2.45"/><circle cx="19.5" cy="8.7" r="2.45"/><circle cx="19.5" cy="18.4" r="2.45"/><circle cx="10.75" cy="17.2" r="3.15"/><path d="M9.95 11.15L10.35 14.05M17.75 10.45L13.1 14.9M13.9 17.6L17.05 18.1"/></g></svg>
<div class="abs" style="left:1315px;top:775px;width:79px;height:34px;background:#efefef;border-radius:10px;"></div>
<svg class="abs" style="left:1318px;top:778px" width="28" height="28" viewBox="0 0 28 28"><g fill="none" stroke="#303030" stroke-width="1.5" stroke-linejoin="round"><circle cx="13.5" cy="13.3" r="7.3"/><path d="M6.8 10.6C9 11.8 10 13.4 10.3 15.2C10.6 16.9 12.8 17.3 13.4 18.5L13.6 20.6"/><path d="M14.6 6.1C13.2 7.4 12.2 9 12.5 10.5C12.8 11.6 14.6 11.9 16.3 11.9C17.8 11.9 18.5 13.4 18.8 15.1L20.6 15.9"/></g></svg>
<div class="t" style="left:1348.00px;top:784.09px;font-size:15.6px;color:#303030;letter-spacing:0.568px;-webkit-text-stroke:0.18px #303030">India</div>
<svg class="abs" style="left:1906px;top:68px" width="12" height="10" viewBox="0 0 12 10"><path d="M6 2.2L9.6 8.2H2.4z" fill="#8a8a8a" stroke="#8a8a8a" stroke-width="1" stroke-linejoin="round"/></svg>
<div class="abs" style="left:1908px;top:83px;width:8px;height:497px;background:#8f8f8f;border-radius:4px;"></div>
<svg class="abs" style="left:1906px;top:812px" width="12" height="10" viewBox="0 0 12 10"><path d="M6 8.2L9.6 2.2H2.4z" fill="#8a8a8a" stroke="#8a8a8a" stroke-width="1" stroke-linejoin="round"/></svg>
</body></html>
